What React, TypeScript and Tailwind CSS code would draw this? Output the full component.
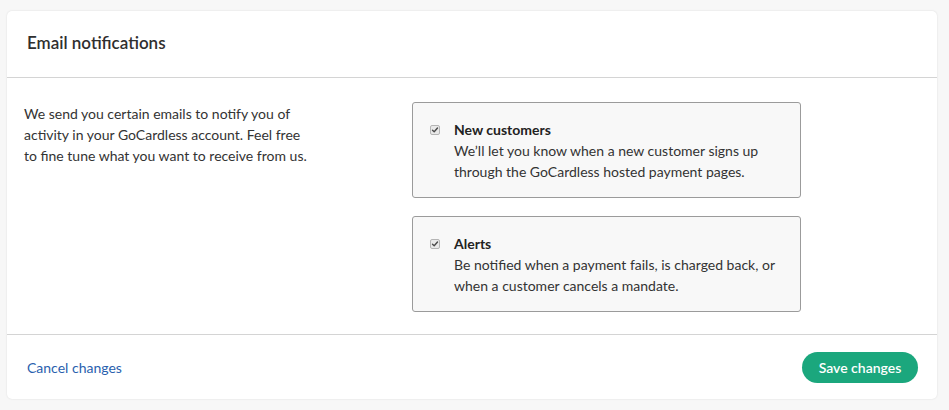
import React from "react";

function Check() {
  return (
    <span className="mt-[6px] flex h-[10px] w-[10px] shrink-0 items-center justify-center rounded-[2px] border border-[#b5b5b5] bg-[#e9e9e9]">
      <svg width="8" height="8" viewBox="0 0 8 8">
        <path d="M1.5 4.2 L3.2 5.8 L6.5 2" fill="none" stroke="#4a4a4a" strokeWidth="1.4" strokeLinecap="round" strokeLinejoin="round" />
      </svg>
    </span>
  );
}

function Option({ title, lines }: { title: string; lines: string[] }) {
  return (
    <div className="flex w-[389px] gap-[14px] rounded-[3px] border border-[#9b9b9b] bg-[#f8f8f8] pl-[17px] pt-[16px] pb-[15px]">
      <Check />
      <div className="text-[14px] leading-[21px] text-[#333]">
        <div className="font-bold text-[#222]">{title}</div>
        {lines.map((l) => (
          <div key={l}>{l}</div>
        ))}
      </div>
    </div>
  );
}

export default function App() {
  return (
    <div className="min-h-[410px] bg-[#f7f7f7] pl-[7px] pr-[12px] pt-[11px] pb-[11px]" style={{ fontFamily: "Lato, 'Noto Sans', sans-serif" }}>
      <div className="rounded-[5px] bg-white shadow-[0_0_2px_rgba(0,0,0,0.12)]">
        <div className="flex h-[67px] items-center border-b border-[#d4d4d4] px-[20px] pb-[2px]">
          <h2 className="text-[17px] font-semibold text-[#2f2f2f]">Email notifications</h2>
        </div>
        <div className="flex border-b border-[#d4d4d4] pl-[17px] pt-[24px] pb-[22px]">
          <div className="w-[388px] pt-[1px] text-[14px] leading-[21px] text-[#333]">
            <p>We send you certain emails to notify you of</p>
            <p>activity in your GoCardless account. Feel free</p>
            <p>to fine tune what you want to receive from us.</p>
          </div>
          <div className="flex flex-col gap-[18px]">
            <Option
              title="New customers"
              lines={["We’ll let you know when a new customer signs up", "through the GoCardless hosted payment pages."]}
            />
            <Option
              title="Alerts"
              lines={["Be notified when a payment fails, is charged back, or", "when a customer cancels a mandate."]}
            />
          </div>
        </div>
        <div className="flex h-[64px] items-center justify-between pl-[20px] pr-[19px]">
          <a className="text-[14px] text-[#2a5fae]" href="#">Cancel changes</a>
          <button className="h-[31px] w-[116px] rounded-full bg-[#1ba77d] text-[14px] font-semibold text-white">Save changes</button>
        </div>
      </div>
    </div>
  );
}
